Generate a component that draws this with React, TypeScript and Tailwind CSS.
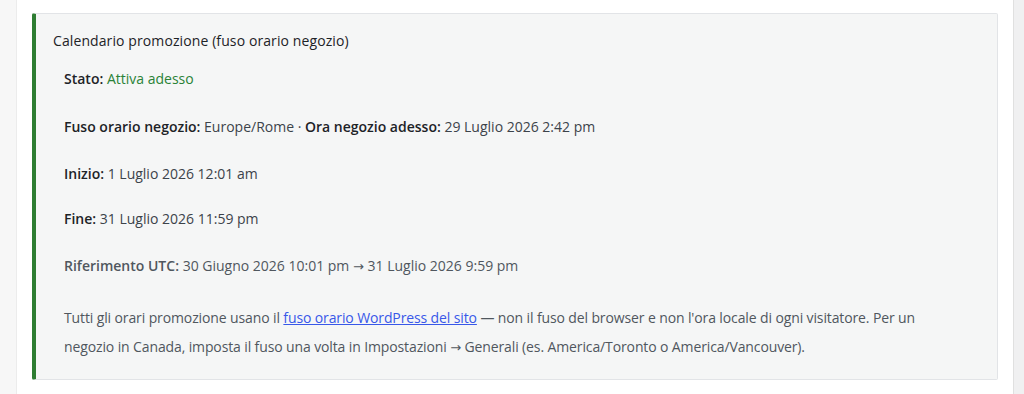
import React from "react";

const Arrow = () => (
  <span className="text-[13px]" style={{ fontFamily: '"DejaVu Sans", sans-serif' }}>→</span>
);

export default function App() {
  return (
    <div className="flex h-[394px] w-[1024px] bg-white text-[14px] text-[#3c434a]" style={{ fontFamily: '"Open Sans", "Noto Sans", sans-serif' }}>
      <div className="w-[17px] shrink-0 border-r border-[#ececec] bg-[#f7f7f7]" />
      <div className="flex-1 px-[15px] pt-[13px]">
        <div className="h-[367px] rounded-[2px] border border-l-4 border-[#e2e4e7] border-l-[#2e7d32] bg-[#f5f6f6] pl-[17px] pr-4 pt-[18px]">
          <div className="font-medium leading-[18px] tracking-[0.1px] text-[#1d2327]">Calendario promozione (fuso orario negozio)</div>
          <div className="pl-[11px]">
            <div className="mt-[20px] leading-[18px]">
              <span className="font-semibold text-[#1d2327]">Stato:</span>{" "}
              <span className="font-medium text-[#2a8237]">Attiva adesso</span>
            </div>
            <div className="mt-[30px] leading-[18px]">
              <span className="font-semibold text-[#1d2327]">Fuso orario negozio:</span> Europe/Rome ·{" "}
              <span className="font-semibold text-[#1d2327]">Ora negozio adesso:</span> 29 Luglio 2026 2:42 pm
            </div>
            <div className="mt-[29px] leading-[18px]">
              <span className="font-semibold text-[#1d2327]">Inizio:</span> 1 Luglio 2026 12:01 am
            </div>
            <div className="mt-[27px] leading-[18px]">
              <span className="font-semibold text-[#1d2327]">Fine:</span> 31 Luglio 2026 11:59 pm
            </div>
            <div className="mt-[29px] leading-[18px]">
              <span className="font-semibold text-[#50575e]">Riferimento UTC:</span>{" "}
              <span className="text-[#50575e]">30 Giugno 2026 10:01 pm <Arrow /> 31 Luglio 2026 9:59 pm</span>
            </div>
            <p className="mt-[27px] max-w-[870px] leading-[29px] tracking-[-0.12px] text-[#50575e]">
              Tutti gli orari promozione usano il{" "}
              <a href="#" className="text-[#3858e9] underline">fuso orario WordPress del sito</a> — non il fuso del browser e non l'ora locale di ogni visitatore. Per un negozio in Canada, imposta il fuso una volta in Impostazioni <Arrow /> Generali (es. America/Toronto o America/Vancouver).
            </p>
          </div>
        </div>
      </div>
      <div className="w-[11px] shrink-0 border-l border-[#e0e0e0] bg-[#f0f0f1]" />
    </div>
  );
}
